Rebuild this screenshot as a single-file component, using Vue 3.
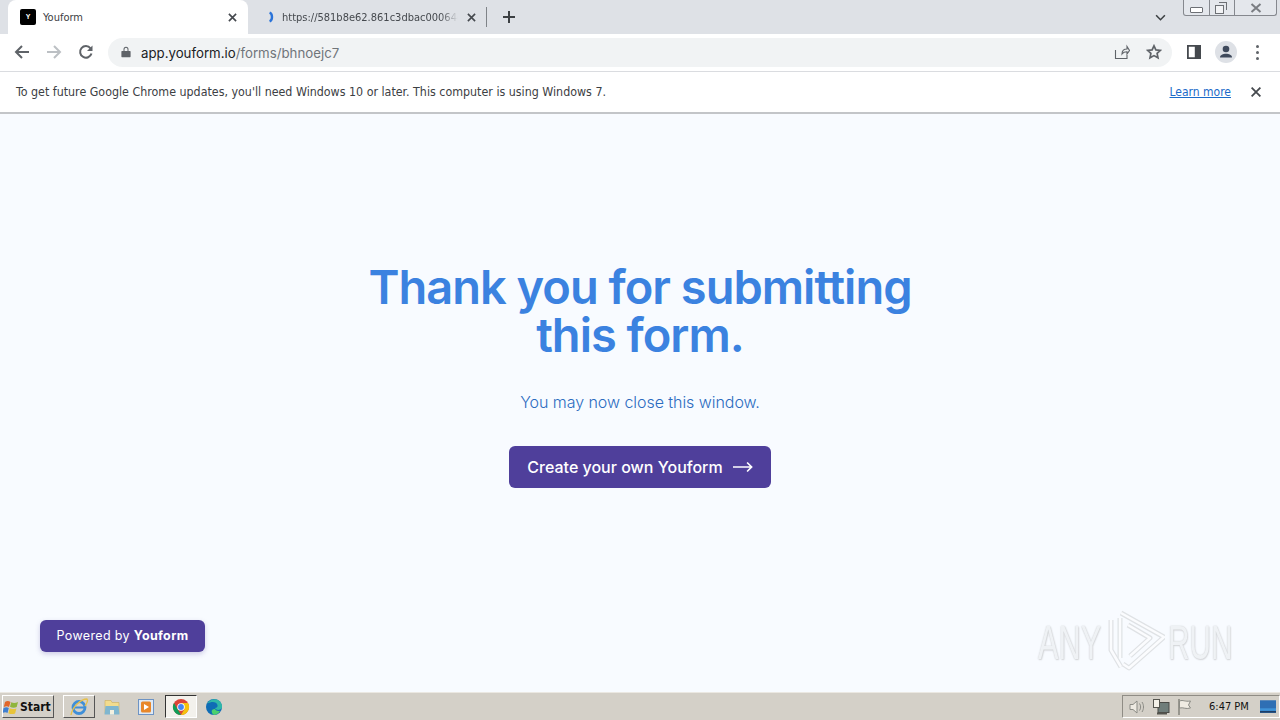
<script setup>
const pageTitle = ['Thank you for submitting', 'this form.']
</script>

<template>
  <div class="screen">
    <header class="tabstrip">
      <div class="tab active">
        <span class="favicon">Y</span>
        <span class="tab-title">Youform</span>
        <svg class="tab-x" viewBox="0 0 10 10"><path d="M1 1l8 8M9 1l-8 8" /></svg>
      </div>
      <div class="tab inactive">
        <svg class="spinner" viewBox="0 0 10 14"><path d="M2 1.500c4 1.500 4 9.500 0 11" /></svg>
        <span class="tab-url">https://581b8e62.861c3dbac00064c</span>
        <svg class="tab-x" viewBox="0 0 10 10"><path d="M1 1l8 8M9 1l-8 8" /></svg>
      </div>
      <span class="tab-sep"></span>
      <svg class="new-tab" viewBox="0 0 12 12"><path d="M6 0v12M0 6h12" /></svg>
      <span class="strip-fill"></span>
      <svg class="chevron" viewBox="0 0 12 8"><path d="M1 1.500l5 5 5-5" /></svg>
      <div class="win-controls">
        <span class="win-btn min"><i></i></span>
        <span class="win-btn max"><i></i><b></b></span>
        <span class="win-btn close">
          <svg viewBox="0 0 12 10"><path d="M1.500 1l9 8M10.500 1l-9 8" /></svg>
        </span>
      </div>
    </header>

    <nav class="toolbar">
      <svg class="nav-icon" viewBox="0 0 16 16"><path d="M15 8H2M8 2L2 8l6 6" /></svg>
      <svg class="nav-icon off" viewBox="0 0 16 16"><path d="M1 8h13M8 2l6 6-6 6" /></svg>
      <svg class="nav-icon" viewBox="0 0 16 16"><path d="M13.500 9.500a5.800 5.800 0 1 1-1-5.200" /><path class="fill" d="M14.500 1.500v5.500H9z" /></svg>
      <div class="omnibox">
        <svg class="lock" viewBox="0 0 10 12"><path d="M1 5h8a.6.6 0 0 1 .6.600v5a.6.6 0 0 1-.6.600H1a.6.6 0 0 1-.6-.600v-5A.6.6 0 0 1 1 5zM2.500 5V3.200a2.500 2.500 0 0 1 5 0V5H6.500V3.200a1.500 1.500 0 0 0-3 0V5z" /></svg>
        <span class="url"><span class="host">app.youform.io</span>/forms/bhnoejc7</span>
        <span class="strip-fill"></span>
        <svg class="share" viewBox="0 0 16 16"><path d="M1.500 6v8.500h11.500V11M8 10c0-3.500 2-5 5-5V2.500l2.500 4-2.500 3.500V7.800c-2 0-3.800.500-5 2.200z" /></svg>
        <svg class="star" viewBox="0 0 16 16"><path d="M8 1.800l1.900 4.100 4.500.500-3.300 3 .900 4.400L8 11.600l-4 2.200.900-4.400-3.300-3 4.500-.500z" /></svg>
      </div>
      <svg class="panel" viewBox="0 0 14 14"><path fill-rule="evenodd" d="M0 0h14v14H0zM1.800 1.800v10.400h6V1.800z" /></svg>
      <span class="avatar">
        <svg viewBox="0 0 22 22"><circle cx="11" cy="8" r="3.300" /><path d="M5 16.500c0-2.500 3-3.700 6-3.700s6 1.200 6 3.700z" /></svg>
      </span>
      <span class="dots"><i></i><i></i><i></i></span>
    </nav>

    <aside class="infobar">
      <span class="info-text">To get future Google Chrome updates, you'll need Windows 10 or later. This computer is using Windows 7.</span>
      <span class="strip-fill"></span>
      <a class="learn">Learn more</a>
      <svg class="info-x" viewBox="0 0 10 10"><path d="M.6.6l8.800 8.800M9.400.6L.6 9.400" /></svg>
    </aside>

    <main class="page">
      <h1 class="title"><span v-for="line in pageTitle" :key="line">{{ line }}</span></h1>
      <p class="sub">You may now close this window.</p>
      <button class="cta">
        Create your own Youform
        <svg viewBox="0 0 22 12"><path d="M0 6h20M15.500 1l5 5-5 5" /></svg>
      </button>
      <div class="powered">Powered by <strong>Youform</strong></div>
      <div class="watermark">
        <span class="wm-any">ANY</span>
        <svg viewBox="0 0 62 66">
          <g class="wm-under">
            <path d="M18 5l43 24-35 31-6-4" />
            <path d="M8 12v30l10 17" />
            <path d="M25 17l22 13-20 18" />
            <path d="M17 10v40" />
          </g>
          <g class="wm-over">
            <path d="M18 5l43 24-35 31-6-4" />
            <path d="M8 12v30l10 17" />
            <path d="M25 17l22 13-20 18" />
            <path d="M17 10v40" />
          </g>
        </svg>
        <span class="wm-run">RUN</span>
      </div>
    </main>

    <footer class="taskbar">
      <div class="start">
        <svg viewBox="0 0 16 16">
          <path fill="#e2672a" d="M2 3c2-1.500 4-1 5.500 0l-1.500 5C4.500 7 3 7 .8 8z" />
          <path fill="#8fb53c" d="M8.300 3.200c2 1 4 1 6.700-.200l-1.300 5c-2.500 1-4.500.800-6.700-.200z" />
          <path fill="#3f7fd0" d="M.6 9c2-1 3.500-1 5.200 0l-1.300 5C3 13 1.500 13-.5 14z" />
          <path fill="#e8c43a" d="M6.700 9.200c2 1 4 1 6.700.200l-1.300 5c-2.500 1-4.500.800-6.700-.200z" />
        </svg>
        <span>Start</span>
      </div>
      <div class="task-btn ie">
        <svg viewBox="0 0 20 20">
          <circle cx="10" cy="10.500" r="6" fill="none" stroke="#3f8fd8" stroke-width="2.800" />
          <path d="M5 10.500h10" stroke="#3f8fd8" stroke-width="2" />
          <path d="M2 18C3 11 11 2 18 2c1.500 1-.5 5-2 7" fill="none" stroke="#e6c04c" stroke-width="1.400" />
        </svg>
      </div>
      <div class="task-icon">
        <svg viewBox="0 0 18 18">
          <path fill="#f2dc8e" stroke="#c9ae5e" stroke-width=".6" d="M2 2.500h6l1 2h7v11H2z" />
          <path fill="#7fb6cf" d="M2.500 8h13l1 8.500h-15z" />
          <path fill="#f3f0e0" d="M7 12h4v4.500H7z" />
        </svg>
      </div>
      <div class="task-icon">
        <svg viewBox="0 0 18 18">
          <rect x="1.500" y="1.500" width="15" height="15" fill="#dfe9f4" stroke="#6d93c4" />
          <rect x="4" y="3.500" width="10" height="11" rx="1.500" fill="#e8872a" />
          <path fill="#fff" d="M7 6l5 3-5 3z" />
        </svg>
      </div>
      <div class="task-btn pressed">
        <svg viewBox="0 0 18 18">
          <circle cx="9" cy="9" r="8" fill="#db4437" />
          <path fill="#0f9d58" d="M9 17a8 8 0 0 1-7-12l4 7z" />
          <path fill="#f4c20d" d="M9 5h7a8 8 0 0 1-7 12l3.500-6z" />
          <circle cx="9" cy="9" r="3.800" fill="#fff" />
          <circle cx="9" cy="9" r="2.900" fill="#4285f4" />
        </svg>
      </div>
      <div class="task-icon">
        <svg viewBox="0 0 18 18">
          <circle cx="9" cy="9" r="8" fill="#0f6cb5" />
          <path fill="#2fb7a8" d="M2 6c2-4 7-6 11-4 3 1.500 4.500 5 4 7.500-.500 2-3.500 3-5.500 2-1-.500-1.500-1-1.500-1.500 1.500 0 3-1 2.500-3C12 4.500 9 3.500 6.500 4 4.500 4.500 3 5 2 6z" />
          <path fill="#4bd06e" d="M10 11c.500 1.500 3 2.500 5 1.800-1 2.500-3.500 4-6 4.200-1.500-1-2.500-2.500-2.300-4 .200-1.300 1.800-2.200 3.300-2z" />
        </svg>
      </div>
      <span class="strip-fill"></span>
      <div class="tray">
        <svg viewBox="0 0 18 18">
          <path d="M2 6.500h3l4-3.500v12l-4-3.500H2z" fill="#eeeae2" stroke="#8b8b85" />
          <path d="M11.500 5.500c1.500 2 1.500 5 0 7M14 4c2 3 2 7 0 10" fill="none" stroke="#8b8b85" />
        </svg>
        <svg viewBox="0 0 18 18">
          <rect x="6" y="4.500" width="11" height="10" fill="#6f7d7a" stroke="#4a4a46" />
          <rect x="1.500" y="1.500" width="6" height="8" fill="#f4f1e8" stroke="#55554f" />
          <path d="M5 14.500h10v2H5z" fill="#55554f" />
        </svg>
        <svg viewBox="0 0 18 18">
          <path d="M3 1v16" stroke="#77776f" stroke-width="1.300" />
          <path d="M3.500 3c4-1.500 5 1 11 0l-2 4 2 3c-5 1.500-7-1-11 0z" fill="#efebe2" stroke="#8b8b85" />
        </svg>
        <span class="clock">6:47 PM</span>
        <svg class="desktop" viewBox="0 0 18 14">
          <rect width="18" height="14" fill="#2f6fb4" />
          <rect y="9" width="18" height="5" fill="#3f93d8" />
          <rect y="12" width="18" height="2" fill="#1d3d66" />
        </svg>
      </div>
    </footer>
  </div>
</template>

<style>
html, body { margin: 0; padding: 0; overflow: hidden; }
</style>

<style scoped>
.screen {
  width: 1280px;
  height: 720px;
  display: flex;
  flex-direction: column;
  overflow: hidden;
  font-family: "DejaVu Sans Condensed", "DejaVu Sans", sans-serif;
  color: #202124;
}
.strip-fill { flex: 1; }

.tabstrip {
  height: 34px;
  flex: none;
  background: #dee1e6;
  display: flex;
  align-items: flex-end;
  padding-left: 8px;
}
.tab {
  height: 34px;
  width: 240px;
  flex: none;
  box-sizing: border-box;
  display: flex;
  align-items: center;
  font-size: 11px;
}
.tab.active {
  background: #fff;
  border-radius: 8px 8px 0 0;
  padding: 0 11px 0 12px;
}
.favicon {
  width: 16px;
  height: 16px;
  border-radius: 2px;
  background: #000;
  color: #fff;
  font: 700 7px/16px "Liberation Sans", sans-serif;
  text-align: center;
  flex: none;
}
.tab-title { margin-left: 7px; flex: 1; color: #3c4043; }
.tab-x { width: 9px; height: 9px; flex: none; fill: none; stroke: #45494e; stroke-width: 1.800; }
.tab.inactive { padding: 0 11px 0 20px; width: 239px; }
.spinner { width: 8px; height: 14px; flex: none; fill: none; stroke: #2a73d9; stroke-width: 3; }
.tab-url {
  margin-left: 6px;
  width: 176px;
  white-space: nowrap;
  overflow: hidden;
  flex: none;
  color: #45494e;
  font-size: 11px;
  -webkit-mask-image: linear-gradient(90deg, #000 90%, transparent);
  mask-image: linear-gradient(90deg, #000 90%, transparent);
}
.tab.inactive .tab-x { margin-left: auto; }
.tab-sep { width: 1px; height: 20px; background: #7f8388; margin: 0 0 7px -1px; flex: none; }
.new-tab { width: 12px; height: 12px; margin: 0 0 11px 16px; fill: none; stroke: #3c4043; stroke-width: 2; flex: none; }
.chevron { width: 11px; height: 7px; margin-bottom: 13px; fill: none; stroke: #3c4043; stroke-width: 1.800; flex: none; }
.win-controls {
  align-self: flex-start;
  display: flex;
  height: 16px;
  margin: 0 3px 0 17px;
  border: 1px solid #85888e;
  border-top: 0;
  border-radius: 0 0 3px 3px;
  box-sizing: border-box;
  background: #e4e7ec;
}
.win-btn { position: relative; display: block; height: 15px; border-left: 1px solid #85888e; box-sizing: border-box; }
.win-btn.min { width: 25px; border-left: 0; }
.win-btn.max { width: 25px; }
.win-btn.close { width: 42px; display: flex; justify-content: center; align-items: center; }
.win-btn.min i { position: absolute; left: 6px; top: 7px; width: 11px; height: 4px; border: 1px solid #6d7075; border-radius: 1px; background: #fff; }
.win-btn.max i { position: absolute; left: 5px; top: 5px; width: 7px; height: 7px; border: 1.500px solid #6d7075; background: #f2f3f5; }
.win-btn.max b { position: absolute; left: 9px; top: 2px; width: 7px; height: 7px; border: 1px solid #6d7075; border-left: 0; border-bottom: 0; }
.win-btn.close svg { width: 12px; height: 10px; fill: none; stroke: #7a7d82; stroke-width: 2; }

.toolbar {
  height: 38px;
  flex: none;
  box-sizing: border-box;
  background: #fff;
  display: flex;
  align-items: center;
  padding: 0 16px 1px 14px;
  border-bottom: 1px solid #dadce0;
}
.nav-icon { width: 16px; height: 16px; margin-right: 16px; flex: none; fill: none; stroke: #5f6368; stroke-width: 2; }
.nav-icon.off { stroke: #bcc0c4; }
.nav-icon .fill { fill: #5f6368; stroke: none; }
.omnibox {
  width: 1064px;
  height: 29px;
  margin-left: -2px;
  flex: none;
  box-sizing: border-box;
  background: #f1f3f4;
  border-radius: 15px;
  display: flex;
  align-items: center;
  padding: 0 10px 0 13px;
}
.lock { width: 10px; height: 12px; fill: #5f6368; flex: none; }
.url { margin: 2px 0 0 10px; font-family: Inter, sans-serif; font-size: 13.250px; color: #70757a; white-space: nowrap; }
.host { color: #202124; }
.share { width: 16px; height: 16px; margin-right: 16px; fill: none; stroke: #5f6368; stroke-width: 1.100; flex: none; }
.star { width: 16px; height: 16px; fill: none; stroke: #5f6368; stroke-width: 1.700; flex: none; }
.panel { width: 14px; height: 14px; margin-left: 15px; fill: #45494e; flex: none; }
.avatar {
  width: 22px;
  height: 22px;
  margin-left: 14px;
  border-radius: 50%;
  background: #dee1e6;
  flex: none;
  display: block;
}
.avatar svg { display: block; width: 22px; height: 22px; fill: #3f4a5c; }
.dots { margin-left: 19px; display: flex; flex-direction: column; gap: 3px; flex: none; }
.dots i { display: block; width: 3px; height: 3px; border-radius: 50%; background: #5f6368; }

.infobar {
  height: 42px;
  flex: none;
  box-sizing: border-box;
  background: #fff;
  display: flex;
  align-items: center;
  padding: 0 19px 0 16px;
  border-bottom: 2px solid #c3c5c8;
  font-size: 12.350px;
}
.info-text { color: #3c4043; white-space: nowrap; }
.learn { color: #1a6ac9; text-decoration: underline; font-size: 12px; }
.info-x { width: 10px; height: 10px; margin-left: 20px; fill: none; stroke: #45494e; stroke-width: 1.800; flex: none; }

.page {
  position: relative;
  flex: 1;
  background: #f8fbff;
  display: flex;
  flex-direction: column;
  align-items: center;
  font-family: Inter, sans-serif;
  padding-top: 149px;
}
.title {
  margin: 0;
  display: flex;
  flex-direction: column;
  align-items: center;
  font-size: 47px;
  line-height: 48px;
  font-weight: 600;
  color: #3b82e0;
  letter-spacing: -1px;
}
.sub { margin: 31px 0 0; font-size: 16px; line-height: 24px; font-weight: 300; color: #2c6cbf; letter-spacing: -0.05px; }
.cta {
  margin-top: 32px;
  width: 262px;
  height: 42px;
  border: 0;
  border-radius: 6px;
  background: #4f3f9b;
  color: #fff;
  font: 500 16px Inter, sans-serif;
  display: flex;
  align-items: center;
  justify-content: center;
  gap: 10px;
}
.cta svg { width: 20px; height: 12px; fill: none; stroke: #fff; stroke-width: 1.800; }
.powered {
  position: absolute;
  left: 40px;
  top: 506px;
  width: 165px;
  height: 32px;
  box-sizing: border-box;
  border-radius: 6px;
  background: #4f3f9b;
  color: #fff;
  font-size: 12.500px;
  line-height: 31px;
  letter-spacing: 0.35px;
  text-align: center;
  box-shadow: 0 2px 5px rgba(79, 63, 155, .25);
  white-space: nowrap;
}
.powered strong { font-weight: 700; }
.watermark {
  position: absolute;
  left: 1038px;
  top: 494px;
  width: 194px;
  height: 66px;
  color: #eff2f5;
  font: 400 48px/66px "Liberation Sans", sans-serif;
  text-shadow: 0 0 2px #c9cbce, 1px 1px 2px #d4d6d9;
  pointer-events: none;
}
.wm-any, .wm-run { position: absolute; top: 2px; transform-origin: left center; white-space: nowrap; }
.wm-any { left: 0; transform: scaleX(.64); }
.wm-run { left: 130px; transform: scaleX(.62); }
.watermark svg { position: absolute; left: 65px; top: 0; width: 62px; height: 66px; fill: none; stroke-linejoin: round; }
.wm-under { stroke: #dfe2e5; stroke-width: 5; }
.wm-over { stroke: #fbfcfe; stroke-width: 2.500; }

.taskbar {
  height: 28px;
  flex: none;
  box-sizing: border-box;
  background: #d4d0c8;
  border-top: 1px solid #ebe8e2;
  display: flex;
  align-items: center;
  padding-left: 2px;
}
.start {
  width: 52px;
  height: 23px;
  box-sizing: border-box;
  border: 1px solid;
  border-color: #fff #555 #555 #fff;
  display: flex;
  align-items: center;
  gap: 1px;
  font: 700 12px "DejaVu Sans Condensed", "DejaVu Sans", sans-serif;
  color: #111;
  flex: none;
}
.start svg { width: 16px; height: 16px; flex: none; }
.task-btn {
  width: 32px;
  height: 23px;
  box-sizing: border-box;
  border: 1px solid;
  border-color: #fff #555 #555 #fff;
  display: flex;
  align-items: center;
  justify-content: center;
  flex: none;
}
.task-btn svg, .task-icon svg { width: 18px; height: 18px; }
.task-btn.ie { margin-left: 9px; }
.task-btn.ie svg { width: 20px; height: 20px; }
.task-btn.pressed { border-color: #333 #fff #fff #333; background: #f3f1ec; margin-left: 2px; }
.task-icon { width: 34px; height: 23px; display: flex; align-items: center; justify-content: center; flex: none; }
.tray {
  width: 158px;
  height: 23px;
  box-sizing: border-box;
  border: 1px solid;
  border-color: #8f8c85 #fff #fff #8f8c85;
  display: flex;
  align-items: center;
  gap: 6px;
  padding-left: 5px;
  flex: none;
}
.tray svg { width: 18px; height: 18px; flex: none; }
.clock { margin-left: 9px; font: 11px "DejaVu Sans Condensed", "DejaVu Sans", sans-serif; color: #111; white-space: nowrap; }
.tray svg.desktop { width: 16px; height: 13px; margin-left: 5px; }
</style>
